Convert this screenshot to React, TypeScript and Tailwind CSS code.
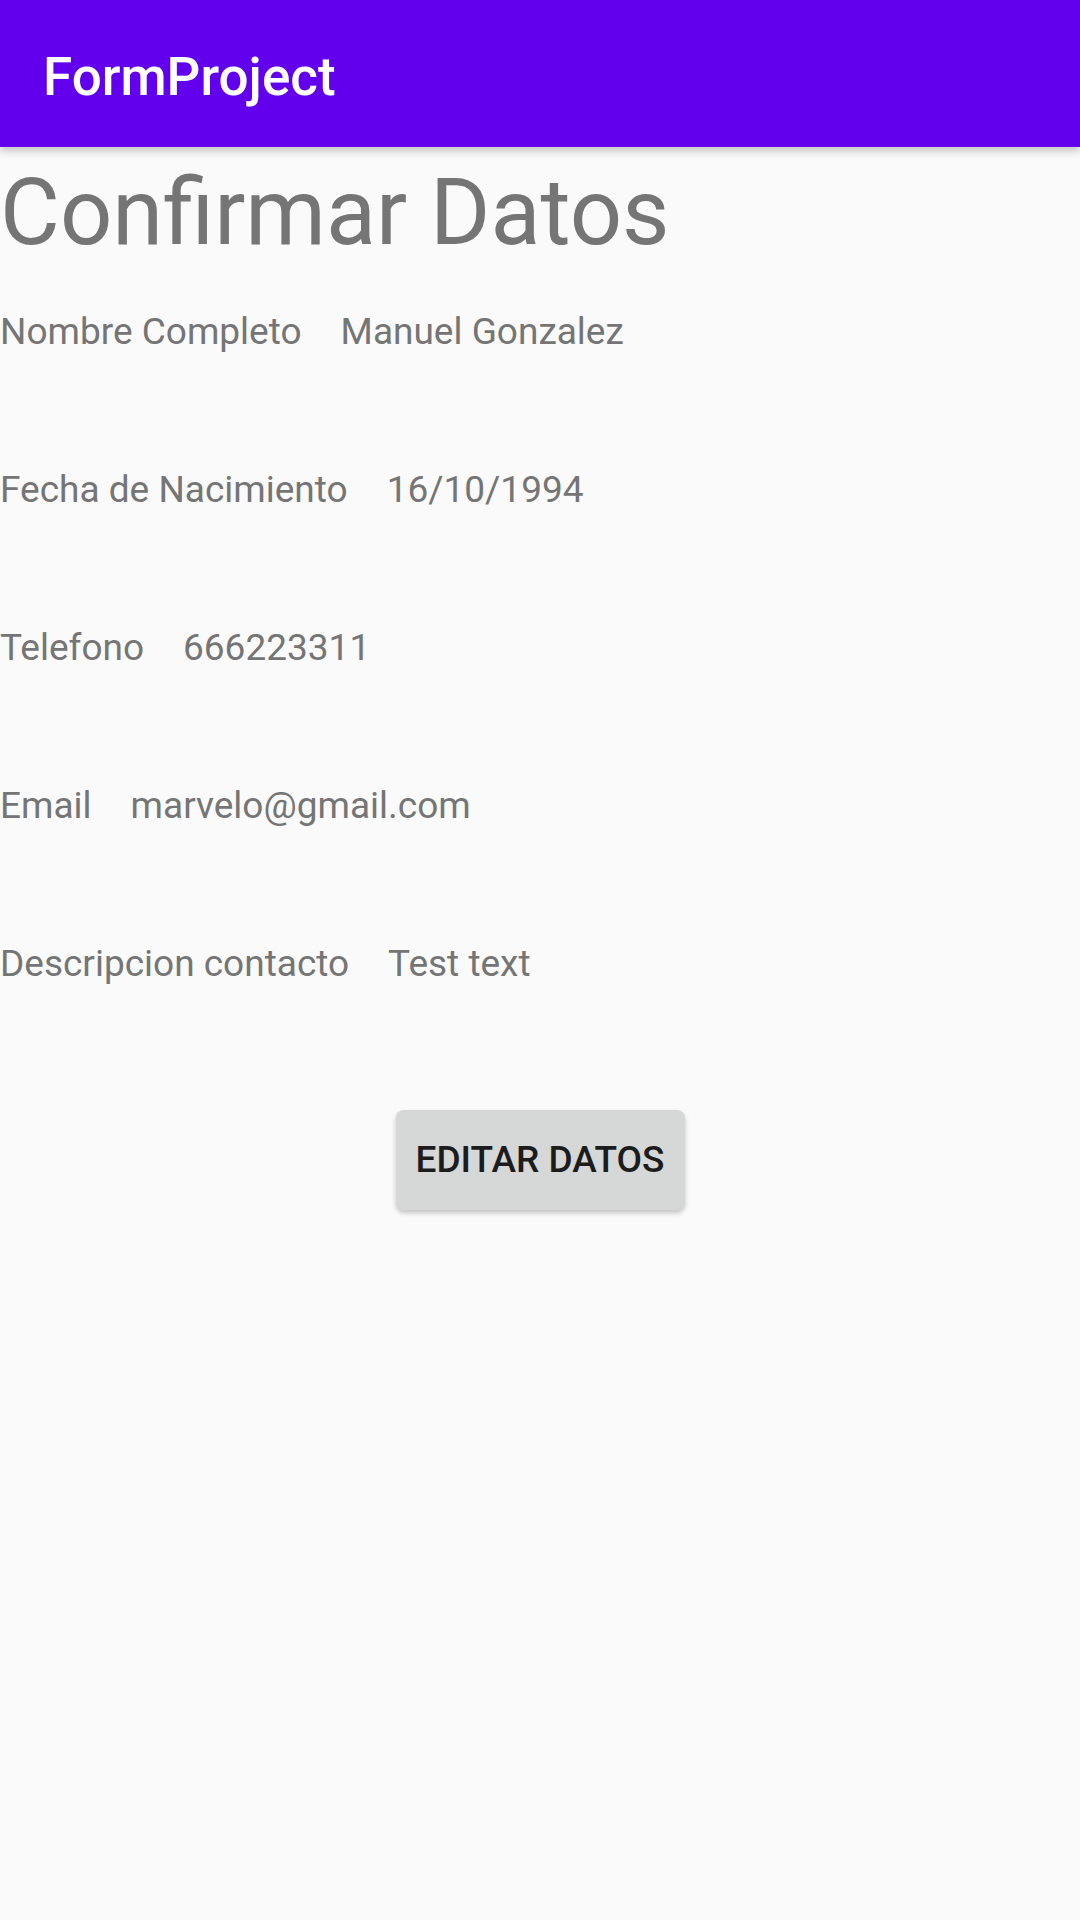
const rows = [
    { label: "Nombre Completo", value: "Manuel Gonzalez" },
    { label: "Fecha de Nacimiento", value: "16/10/1994" },
    { label: "Telefono", value: "666223311" },
    { label: "Email", value: "marvelo@gmail.com" },
    { label: "Descripcion contacto", value: "Test text" },
];

const App = () => {
    return (
        <div
            className="min-h-[1920px] w-[1080px] bg-[#fafafa]"
            style={{ fontFamily: "Roboto, 'Noto Sans', sans-serif" }}
        >
            <header className="relative z-10 h-[147px] bg-[#6200ee] pl-[43px] pt-[46px] shadow-[0_4px_8px_rgba(0,0,0,0.22)]">
                <h1 className="text-[53px] leading-[62px] font-medium text-white">FormProject</h1>
            </header>

            <main>
                <h2 className="mt-[12px] text-[92px] leading-[108px] text-[#757575]">Confirmar Datos</h2>

                <div className="mt-[43px] flex flex-col">
                    {rows.map((row) => (
                        <div key={row.label} className="flex h-[158px] gap-[39px] text-[37px] leading-[44px] text-[#757575]">
                            <span>{row.label}</span>
                            <span>{row.value}</span>
                        </div>
                    ))}
                </div>

                <div className="mt-[10px] flex justify-center">
                    <button className="flex h-[100px] w-[289px] items-center justify-center rounded-[8px] bg-[#d6d7d7] text-[37px] leading-[44px] font-medium text-[#1c1c1c] shadow-[0_3px_5px_rgba(0,0,0,0.22)]">
                        EDITAR DATOS
                    </button>
                </div>
            </main>
        </div>
    );
};

export default App;
